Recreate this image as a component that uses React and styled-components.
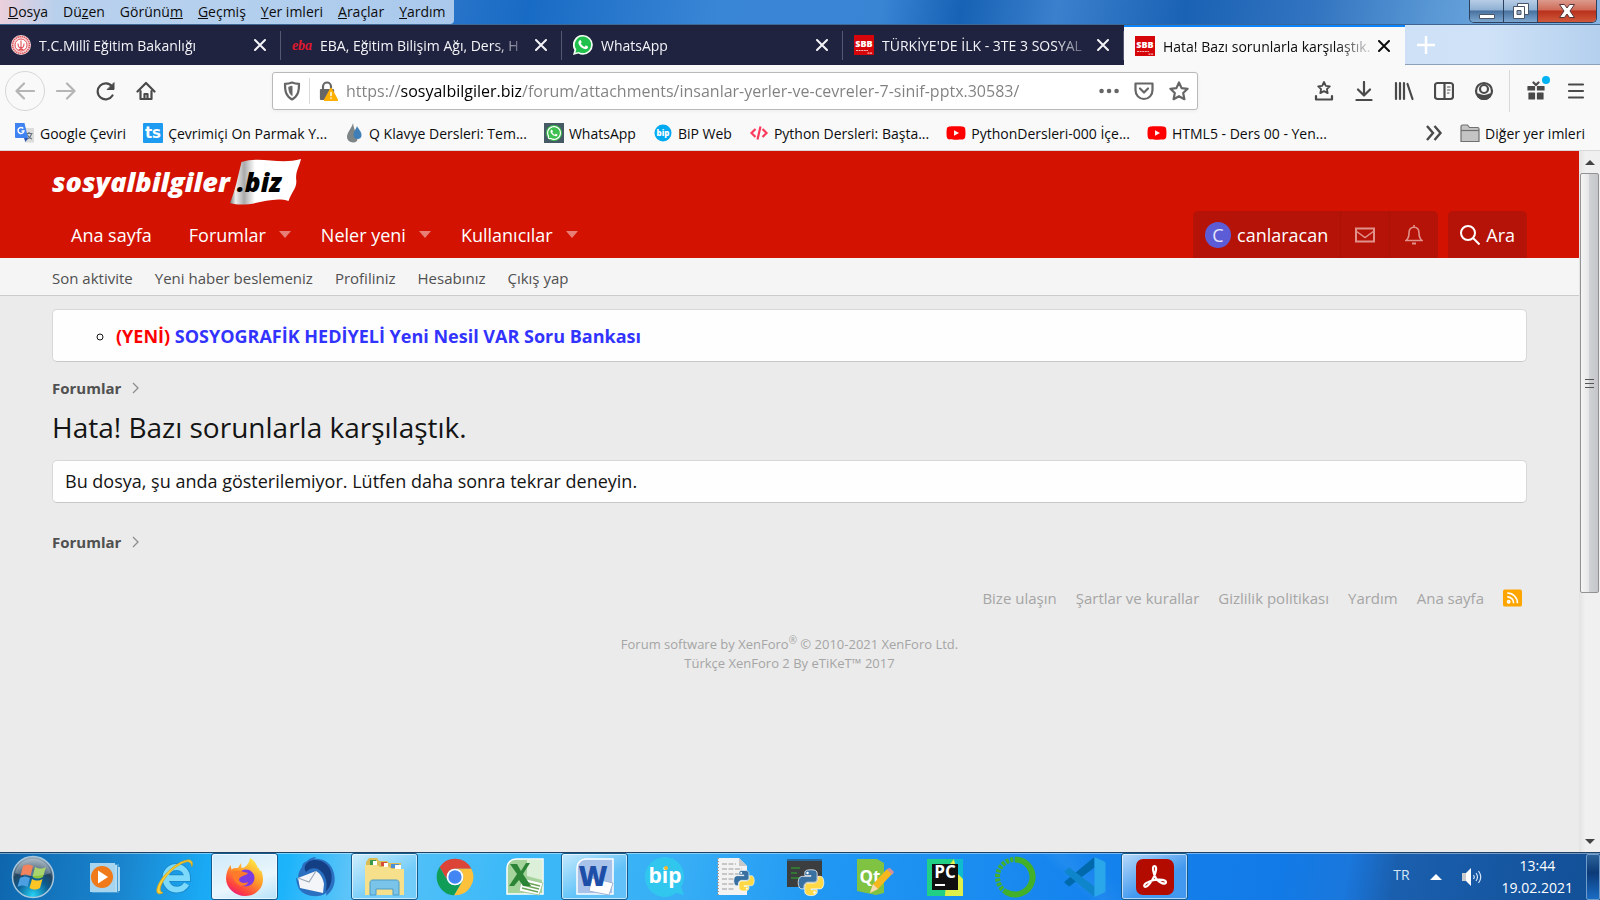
import React, { useState } from 'react'
import styled, { createGlobalStyle } from 'styled-components'
import { FaWhatsapp, FaYoutube } from 'react-icons/fa'

const menuItems = [
  ['', 'D', 'osya'],
  ['Dü', 'z', 'en'],
  ['Görünü', 'm', ''],
  ['', 'G', 'eçmiş'],
  ['', 'Y', 'er imleri'],
  ['', 'A', 'raçlar'],
  ['', 'Y', 'ardım'],
]

const tabs = [
  { icon: 'meb', title: 'T.C.Millî Eğitim Bakanlığı' },
  { icon: 'eba', title: 'EBA, Eğitim Bilişim Ağı, Ders, H' },
  { icon: 'whatsapp', title: 'WhatsApp' },
  { icon: 'sbb', title: "TÜRKİYE'DE İLK - 3TE 3 SOSYAL" },
  { icon: 'sbb', title: 'Hata! Bazı sorunlarla karşılaştık.' },
]

const bookmarks = [
  { icon: 'translate', title: 'Google Çeviri' },
  { icon: 'ts', title: 'Çevrimiçi On Parmak Y...' },
  { icon: 'drop', title: 'Q Klavye Dersleri: Tem...' },
  { icon: 'whatsappBox', title: 'WhatsApp' },
  { icon: 'bipSmall', title: 'BiP Web' },
  { icon: 'code', title: 'Python Dersleri: Başta...' },
  { icon: 'youtube', title: 'PythonDersleri-000 İçe...' },
  { icon: 'youtube', title: 'HTML5 - Ders 00 - Yen...' },
]

const navItems = [
  { title: 'Ana sayfa' },
  { title: 'Forumlar', menu: true },
  { title: 'Neler yeni', menu: true },
  { title: 'Kullanıcılar', menu: true },
]

const subNav = ['Son aktivite', 'Yeni haber beslemeniz', 'Profiliniz', 'Hesabınız', 'Çıkış yap']
const footerLinks = ['Bize ulaşın', 'Şartlar ve kurallar', 'Gizlilik politikası', 'Yardım', 'Ana sayfa']

const PythonMark = () => (
  <>
    <path fill="#3871a1" stroke="#fff" strokeWidth="3" d="M63.391 1.988c-4.222.02-8.252.379-11.8 1.007-10.45 1.846-12.346 5.71-12.346 12.837v9.411h24.693v3.137H29.977c-7.176 0-13.46 4.313-15.426 12.521-2.268 9.405-2.368 15.275 0 25.096 1.755 7.311 5.947 12.519 13.124 12.519h8.491V67.234c0-8.151 7.051-15.34 15.426-15.34h24.665c6.866 0 12.346-5.654 12.346-12.548V15.833c0-6.693-5.646-11.72-12.346-12.837-4.244-.706-8.645-1.027-12.866-1.008z" />
    <path fill="#ffd845" stroke="#fff" strokeWidth="3" d="M91.682 28.38v10.966c0 8.5-7.208 15.655-15.426 15.655H51.591c-6.756 0-12.346 5.783-12.346 12.549v23.515c0 6.691 5.818 10.628 12.346 12.547 7.816 2.297 15.312 2.713 24.665 0 6.216-1.801 12.346-5.423 12.346-12.547v-9.412H63.938v-3.138h37.012c7.176 0 9.852-5.005 12.348-12.519 2.578-7.735 2.467-15.174 0-25.096-1.774-7.145-5.161-12.521-12.348-12.521h-9.268z" />
    <circle cx="50" cy="14.5" r="5" fill="#fff" />
    <circle cx="78" cy="92.5" r="5" fill="#fff" />
  </>
)

const smallIcons = {
  meb: (
    <svg viewBox="0 0 20 20" width="20" height="20">
      <circle cx="10" cy="10" r="10" fill="#f6dcdd" />
      <circle cx="10" cy="10" r="8.4" fill="none" stroke="#e0525a" strokeWidth="1.6" strokeDasharray="1.4 .7" />
      <circle cx="10" cy="10" r="6" fill="#fff" stroke="#e0525a" />
      <path d="M10 5.500v8M7 8.500c0 4 1.500 4.500 3 5 1.500-.5 3-1 3-5M7.500 14.500h5" fill="none" stroke="#e0525a" strokeWidth="1.100" />
    </svg>
  ),
  eba: (
    <svg viewBox="0 0 20 20" width="20" height="20">
      <text x="10" y="15" textAnchor="middle" fontFamily="Liberation Serif, serif" fontStyle="italic" fontWeight="700" fontSize="14" fill="#e0182d">eba</text>
    </svg>
  ),
  whatsapp: (
    <svg viewBox="0 0 20 20" width="20" height="20">
      <path d="M10 0a9.800 9.800 0 0 1 0 19.700 10 10 0 0 1-4.700-1.200L0 20l1.400-5A9.800 9.800 0 0 1 10 0z" fill="#f4fff4" />
      <path d="M10 1.600a8.200 8.200 0 1 1-4.200 15.300l-3.400.9.9-3.300A8.200 8.200 0 0 1 10 1.600z" fill="#1fc04c" />
      <path d="M6.900 5.200c.5-.2.9 0 1.100.5l.6 1.400c.1.300 0 .6-.8 1.500.8 1.600 2 2.700 3.700 3.300l.9-1.100c.2-.3.400-.3.700-.2l1.700.8c.4.200.400.5.200 1.100-.5 1.500-2 1.900-3.200 1.600-3-.8-5.600-3.300-6.300-5.700-.3-1.300.3-2.700 1.400-3.200z" fill="#fff" />
    </svg>
  ),
  sbb: (
    <svg viewBox="0 0 20 20" width="20" height="20">
      <path d="M0 0h20v20H0z" fill="#d6050a" />
      <text x="10" y="11.500" textAnchor="middle" fontFamily="Open Sans, sans-serif" fontWeight="800" fontSize="9" fill="#fff">SBB</text>
      <path d="M2 15.500h12M13.500 18.200h5" stroke="#fff" strokeWidth="1.200" opacity=".7" strokeDasharray="2 .6" />
    </svg>
  ),
  translate: (
    <svg viewBox="0 0 20 20" width="20" height="20">
      <path d="M7 5h12v14.500H10z" fill="#dcdcdc" />
      <path d="M10.500 10.500h7M14 9v1.500M16.500 10.500c-.5 2.800-2.500 4.800-5 6M12 11.500c1 2.200 2.700 3.700 5 4.500" stroke="#61717f" fill="none" strokeWidth="1.200" />
      <path d="M0 0h9.500l3.500 15H1a1 1 0 0 1-1-1z" fill="#3f83f2" />
      <path d="M8.300 5.500A3 3 0 1 0 9 8H6.500" stroke="#fff" fill="none" strokeWidth="1.400" />
      <path d="M9 15h4l-2.500 4z" fill="#2a55b5" />
    </svg>
  ),
  ts: (
    <svg viewBox="0 0 20 20" width="20" height="20">
      <rect width="20" height="20" rx="1" fill="#1d9bf0" />
      <text x="10" y="15" textAnchor="middle" fontFamily="DejaVu Sans, sans-serif" fontWeight="700" fontSize="15" fill="#fff">ts</text>
    </svg>
  ),
  drop: (
    <svg viewBox="0 0 20 20" width="20" height="20">
      <path d="M9 0C8 5 3 9 3 14a6 6 0 0 0 10 4c2-4-3-10-4-18z" fill="#7e8586" />
      <path d="M13 3c-.6 3-3.500 5-3.500 9a4 4 0 0 0 8 0c0-4-3.500-6-4.500-9z" fill="#3f7fb8" />
    </svg>
  ),
  bipSmall: (
    <svg viewBox="0 0 20 20" width="20" height="20">
      <circle cx="10" cy="10" r="8.500" fill="#00aaf2" />
      <text x="10" y="13" textAnchor="middle" fontFamily="Open Sans, sans-serif" fontWeight="800" fontSize="8" fill="#fff">bip</text>
    </svg>
  ),
  code: (
    <svg viewBox="0 0 20 20" width="20" height="20" fill="none" stroke="#fb3a5d" strokeWidth="2.200">
      <path d="M6.500 6 2.500 10l4 4M13.500 6l4 4-4 4M11.500 3.500l-3 13" />
    </svg>
  ),
}

const taskIcons = {
  media: (
    <svg viewBox="0 0 38 38" width="38" height="38">
      <path d="M6 6h27v29H6z" fill="#5ba8d8" opacity=".7" />
      <path d="M4 5h25v29H4z" fill="#a7d4ef" />
      <path d="M30 7v27M33 9v24" stroke="#d8effb" strokeWidth="1.500" />
      <circle cx="16" cy="19" r="11" fill="#f07a1a" />
      <path d="M12 12.500v13l10-6.500z" fill="#fff" />
    </svg>
  ),
  ie: (
    <svg viewBox="0 0 38 38" width="40" height="40">
      <path d="M10 20h20.500c0-6.500-4.500-10.500-10.200-10.500S10 14 10 20s4.500 11 10.500 11c4.500 0 7.500-2 9.500-5.500" fill="none" stroke="#1b8cd0" strokeWidth="7.500" />
      <path d="M10 20h20.500c0-6.500-4.500-10.500-10.200-10.500S10 14 10 20s4.500 11 10.500 11c4.500 0 7.500-2 9.500-5.500" fill="none" stroke="#7ddafa" strokeWidth="5.500" />
      <path d="M35 9c1.500-5-1-7-5-6C20 5 6 18 2.500 28c-2 6 0 8.500 5 6C3 33 5 27 9 21 15 12 24 6 30 4.500c3-.5 4.500 1 5 4.500z" fill="#f8d03a" stroke="#d9a514" strokeWidth=".8" />
    </svg>
  ),
  firefox: (
    <svg viewBox="0 0 38 38" width="38" height="38">
      <defs>
        <linearGradient id="fx" x1=".8" y1="0" x2=".2" y2="1">
          <stop offset="0" stopColor="#fff04a" />
          <stop offset=".45" stopColor="#ff9a2a" />
          <stop offset=".8" stopColor="#ff4040" />
          <stop offset="1" stopColor="#e31587" />
        </linearGradient>
      </defs>
      <path d="M24 0c5 3 7 7 7.500 9.500 1.500.5 2 2 2.500 3.500 1 .5 1-1 1-1 2 5 2 8 2 9.500C37 31 29 38 19 38S0 30 0 20.500C0 16 1.500 11 4.500 7l1 4.500C8 9.500 10 10 12 10l3-5 .5 5c2 0 4-1 5.500-3 1.500-2 2.500-4 3-7z" fill="url(#fx)" />
      <circle cx="20" cy="20" r="8.500" fill="#7a3be0" />
      <path d="M6 14c4-2 8-2 12 0l4 1c-1 2-4 2-5 3 0 0-4 1-4 4 1 3 5 4 9 2-2 7-15 5-16-10z" fill="#ff7a2b" />
    </svg>
  ),
  thunderbird: (
    <svg viewBox="0 0 42 40" width="42" height="40">
      <path d="M13 4c3-3 6-4 9-4l-2 2c8-1 15 3 18 9 5 10 3 22-6 28 1-2 0-3 0-3-8 6-22 3-27-4-2-4-3-9-3-12l2 3c0-6 1-9 4-13 0-3 2-5 5-6z" fill="#2a6fc0" />
      <path d="M14 5c8-5 21 0 23 10 2 8-1 16-5 19 2-10-1-18-8-22-5-2-9 0-12 3-2-3-2-7 2-10z" fill="#153f85" />
      <path d="M4 21 22 14c5 3 7 8 8 13l-1 9-23-5z" fill="#f3f5f8" />
      <path d="m4 21 11 4 7-11" fill="none" stroke="#9ea8b6" strokeWidth="1.200" />
    </svg>
  ),
  explorer: (
    <svg viewBox="0 0 42 40" width="42" height="40">
      <path d="M2 5 5 1h8l2 3h8l2 2h12v32H2z" fill="#d9bc56" />
      <path d="M6 3h6v5H6z" fill="#3b9a49" /><path d="M17 5h6v4h-6z" fill="#d65039" /><path d="M27 7h8v4h-8z" fill="#4b8ed1" />
      <path d="M9 4h4v4H9zM20 6h4v4h-4zM31 8h6v4h-6z" fill="#fff" />
      <path d="M1 8h12l3 2h9l3 2h12v26H1z" fill="#f6e08c" />
      <path d="M6 38V26c0-2 1-3 3-3h23c2 0 3 1 3 3v12h-6v-6H12v6z" fill="#79c4e8" stroke="#4c9bc8" />
    </svg>
  ),
  chrome: (
    <svg viewBox="0 0 48 48" width="40" height="40">
      <path d="M5.540 12.030A22 22 0 0 1 43.600 14H24a10 10 0 0 0-8.660 15z" fill="#db4437" />
      <path d="M43.600 14A22 22 0 0 1 22.860 45.970L32.660 29A10 10 0 0 0 24 14z" fill="#fdc13c" />
      <path d="M22.860 45.970A22 22 0 0 1 5.540 12.030L15.340 29a10 10 0 0 0 17.320 0z" fill="#0f9d58" />
      <circle cx="24" cy="24" r="10" fill="#fff" />
      <circle cx="24" cy="24" r="8" fill="#4285f4" />
    </svg>
  ),
  excel: (
    <svg viewBox="0 0 40 40" width="40" height="40">
      <path d="M11 2h27v35H2V11c0-5 4-9 9-9z" fill="#a5d39c" stroke="#fff" strokeWidth="1.500" />
      <path d="M22 3h15v20l-15-4z" fill="#dcefd8" />
      <path d="m17 21 21 5-4 12-20-4z" fill="#fff" stroke="#a8c99e" />
      <path d="m19 25 16 4M18 28l16 4M17 31l16 4" stroke="#6aa458" strokeWidth="1.500" />
      <path d="M5 7h7l4 7 5-8h4l-7 11 8 12h-8l-4-6-5 6H4l8-12z" fill="#2c8436" />
    </svg>
  ),
  word: (
    <svg viewBox="0 0 40 40" width="40" height="40">
      <path d="M11 2h27v35H2V11c0-5 4-9 9-9z" fill="#a9c2ea" stroke="#fff" strokeWidth="1.500" />
      <path d="m17 21 21 5-4 12-20-4z" fill="#fff" stroke="#a2b4d4" />
      <text x="18" y="29" textAnchor="middle" fontFamily="Open Sans, sans-serif" fontWeight="800" fontSize="28" fill="#1d4fa8">W</text>
    </svg>
  ),
  bip: (
    <svg viewBox="0 0 40 40" width="40" height="40">
      <path d="M20 0c11 0 19 9 19 20 0 4-1 7-3 10l3 8-8-2c-3 2-7 4-11 4C9 40 0 31 0 20S9 0 20 0z" fill="#30c6ee" />
      <text x="20" y="26" textAnchor="middle" fontFamily="Open Sans, sans-serif" fontWeight="700" fontSize="21" fill="#fff">bip</text>
      <circle cx="21" cy="11" r="2" fill="#f5b82e" />
    </svg>
  ),
  pyfile: (
    <svg viewBox="0 0 40 40" width="40" height="40">
      <path d="M3 1h21l8 8v29H3z" fill="#f2f2f2" />
      <path d="M24 1v8h8z" fill="#c8c8c8" />
      <path d="M7 7h14M7 12h20M7 17h18M7 22h12M7 27h12M7 32h12" stroke="#b9b9b9" strokeWidth="1.500" strokeDasharray="5 1.500" />
      <path d="M3 1v37" stroke="#999" strokeDasharray="1 2" strokeWidth="2" />
      <svg x="17" y="13" width="24" height="22" viewBox="8 0 112 110"><PythonMark /></svg>
    </svg>
  ),
  pyconsole: (
    <svg viewBox="0 0 40 40" width="40" height="40">
      <path d="M2 2h35v28H2z" fill="#3c3d3f" />
      <path d="M2 2h35v2H2z" fill="#23679c" />
      <path d="M6 11h9M6 16h6M6 21h9" stroke="#2f8a35" strokeWidth="1.500" />
      <svg x="12" y="12" width="28" height="28" viewBox="8 0 112 110"><PythonMark /></svg>
    </svg>
  ),
  qt: (
    <svg viewBox="0 0 40 40" width="40" height="40">
      <path d="M2 2h20l7 4v30l-8 2-19-4z" fill="#80c342" />
      <text x="15" y="26" textAnchor="middle" fontFamily="Open Sans, sans-serif" fontWeight="700" fontSize="17" fill="#fff">Qt</text>
      <path d="m15 36 3-9 14-15 5 5-14 15z" fill="#f5b81f" />
      <path d="m32 12 3-1 4 4-2 3z" fill="#d98f98" />
      <path d="m15 36 3-9 5 5z" fill="#f3dcb4" />
    </svg>
  ),
  pycharm: (
    <svg viewBox="0 0 40 40" width="40" height="40">
      <path d="M2 2h36v37H2z" fill="#21cf85" />
      <path d="M22 11 29 2l9 20v17H20z" fill="#dff04a" />
      <path d="M29 2h9v20l-6-6z" fill="#0ebccd" />
      <path d="M7 7h26v26H7z" fill="#101010" />
      <text x="20" y="21" textAnchor="middle" fontFamily="Open Sans, sans-serif" fontWeight="700" fontSize="17" fill="#fff">PC</text>
      <path d="M10 28h10" stroke="#fff" strokeWidth="2" />
    </svg>
  ),
  anaconda: (
    <svg viewBox="0 0 42 42" width="42" height="42" fill="none" stroke="#43b02a">
      <path d="M21 3.500a17.500 17.500 0 1 1-9 32.500" strokeWidth="6" />
      <path d="M12 36a17.500 17.500 0 0 1 9-32.500" strokeWidth="5" strokeDasharray="3 1.500" />
    </svg>
  ),
  vscode: (
    <svg viewBox="0 0 40 40" width="42" height="42">
      <path d="M29 1v10L5 29l-4-3c-.7-.7-.7-1.500 0-2z" fill="#0069ac" />
      <path d="M29 39V29L5 11l-4 3c-.7.700-.7 1.500 0 2z" fill="#0f86cb" />
      <path d="m29 1 9 4c1 .5 1.500 1 1.500 2v26c0 1-.5 1.500-1.500 2l-9 4z" fill="#2aa6ea" />
    </svg>
  ),
  acrobat: (
    <svg viewBox="0 0 38 38" width="38" height="38">
      <rect y="1" width="38" height="36" rx="7" fill="#b30b00" />
      <path d="M18.500 8c3 0 1.500 8-2 13.500-3 5-6.500 8.500-8 7-1.800-2 4-5.500 10-6.500 6-1 11.500 0 11.500 2.300-.5 3-7 .5-10-4-2.500-4-4.500-12.300-1.500-12.300z" fill="none" stroke="#fff" strokeWidth="2.200" />
    </svg>
  ),
}

const taskbar = [
  { icon: 'media', title: 'Windows Media Player' },
  { icon: 'ie', title: 'Internet Explorer' },
  { icon: 'firefox', title: 'Firefox', state: 'active' },
  { icon: 'thunderbird', title: 'Thunderbird' },
  { icon: 'explorer', title: 'Windows Gezgini', state: 'open' },
  { icon: 'chrome', title: 'Chrome' },
  { icon: 'excel', title: 'Excel' },
  { icon: 'word', title: 'Word', state: 'open' },
  { icon: 'bip', title: 'BiP' },
  { icon: 'pyfile', title: 'IDLE' },
  { icon: 'pyconsole', title: 'Python' },
  { icon: 'qt', title: 'Qt Designer' },
  { icon: 'pycharm', title: 'PyCharm' },
  { icon: 'anaconda', title: 'Anaconda' },
  { icon: 'vscode', title: 'VS Code' },
  { icon: 'acrobat', title: 'Acrobat Reader', state: 'open' },
]

const SmallIcon = ({ name }) => {
  if (name === 'youtube') return <FaYoutube size={20} color="#f00" />
  if (name === 'whatsappBox') return <WhatsappBox><FaWhatsapp size={16} /></WhatsappBox>
  return smallIcons[name]
}

const CloseIcon = () => (
  <svg viewBox="0 0 12 12" width="12" height="12" stroke="currentColor" strokeWidth="2" strokeLinecap="round">
    <path d="m1 1 10 10M11 1 1 11" />
  </svg>
)

const Tool = ({ label, children, ...rest }) => (
  <ToolButton aria-label={label} {...rest}>
    <svg viewBox="0 0 20 20" width="20" height="20" fill="none" stroke="currentColor" strokeWidth="2.200" strokeLinecap="round" strokeLinejoin="round">
      {children}
    </svg>
  </ToolButton>
)

const Crumbs = () => (
  <Breadcrumb aria-label="Konum">
    <a href="#forumlar">Forumlar</a>
    <svg viewBox="0 0 8 12" width="8" height="12" fill="none" stroke="#8d8d8d" strokeWidth="1.300"><path d="m1 1 5 5-5 5" /></svg>
  </Breadcrumb>
)

const App = () => {
  const [activeTab, setActiveTab] = useState(4)
  const [url, setUrl] = useState('https://sosyalbilgiler.biz/forum/attachments/insanlar-yerler-ve-cevreler-7-sinif-pptx.30583/')

  return (
    <Desktop>
      <GlobalStyle />
      <TitleBar>
        <MenuBar>
          {menuItems.map(([before, key, after]) => (
            <MenuButton key={before + key + after}>{before}<u>{key}</u>{after}</MenuButton>
          ))}
        </MenuBar>
        <WindowControls>
          <ControlButton aria-label="Küçült">
            <svg viewBox="0 0 18 18" width="18" height="18"><path d="M1.500 12.500h15v4h-15z" fill="#fff" stroke="#4b5668" /></svg>
          </ControlButton>
          <ControlButton aria-label="Önceki boyut">
            <svg viewBox="0 0 18 18" width="18" height="18" fill="#fff" stroke="#4b5668"><path d="M5.500 1.500h11v11h-11z" /><path d="M1.500 4.500h11v12h-11z" /><path d="M5 8.500h4v4H5z" fill="#8fa3bd" /></svg>
          </ControlButton>
          <ControlButton $close aria-label="Kapat">
            <svg viewBox="0 0 18 18" width="18" height="18"><path d="M1.500 2.500h5L9 6l2.500-3.500h5L12 9l4.500 6.500h-5L9 12l-2.500 3.500h-5L6 9z" fill="#fff" stroke="#54343a" /></svg>
          </ControlButton>
        </WindowControls>
      </TitleBar>

      <TabStrip>
        {tabs.map((tab, i) => (
          <Tab key={tab.title} $active={i === activeTab}>
            <TabTitle onClick={() => setActiveTab(i)}>
              <SmallIcon name={tab.icon} />
              <span>{tab.title}</span>
            </TabTitle>
            <TabClose aria-label="Sekmeyi kapat"><CloseIcon /></TabClose>
          </Tab>
        ))}
        <NewTab aria-label="Yeni sekme">
          <svg viewBox="0 0 18 18" width="18" height="18" stroke="#fff" strokeWidth="2.500"><path d="M9 0v18M0 9h18" /></svg>
        </NewTab>
      </TabStrip>

      <Toolbar>
        <Tool label="Geri" $round disabled><path d="M19 10H2M9 2.500 1.500 10 9 17.500" /></Tool>
        <Tool label="İleri" disabled><path d="M1 10h17M11 2.500l7.500 7.500-7.500 7.500" /></Tool>
        <Tool label="Yenile"><path d="M16.500 14.500A8 8 0 1 1 16 5.500" /><path d="M18 2v6.500h-6.500z" fill="currentColor" strokeWidth="1" /></Tool>
        <Tool label="Giriş sayfası"><path d="M1.500 10.500 10 2l8.500 8.500" /><path d="M4.500 10v8h11v-8" /><path d="M8.500 18v-5h3v5" /></Tool>
        <Spacer />
        <UrlBar>
          <Tool label="Koruma" $tight><path d="M10 1.500c2.500 1 4.500 1.300 7 1.300 0 7-.5 12-7 15.700C3.500 14.800 3 9.800 3 2.800c2.500 0 4.500-.3 7-1.300z" /><path d="M10 5.500v9c-2.500-2-3-4.500-3.200-8z" fill="currentColor" strokeWidth="1" /></Tool>
          <Divider $height={26} />
          <Tool label="Site bilgisi" $tight>
            <path d="M5 9V5.500a4 4 0 0 1 8 0V8" />
            <path d="M3 9h12v9H3z" fill="currentColor" />
            <path d="m13 8 6 11H7z" fill="#ffb000" stroke="#ffb000" /><path d="M13 11.500v3M13 17v.3" stroke="#fff" strokeWidth="1.500" />
          </Tool>
          <UrlInput aria-label="Adres" value={url} onChange={(e) => setUrl(e.target.value)} />
          <Tool label="Sayfa eylemleri" $tight><path d="M2.500 10h.1M10 10h.1M17.500 10h.1" strokeWidth="4.500" /></Tool>
          <Tool label="Pocket" $tight><path d="M1.500 2.500h17V9c0 5-3.500 9-8.500 9s-8.500-4-8.500-9z" /><path d="m6 7.500 4 4 4-4" /></Tool>
          <Tool label="Yer imlerine ekle" $tight><path d="m10 1.500 2.600 5.600 6 .7-4.400 4.200 1.200 6.200-5.400-3-5.400 3L5.800 12 1.400 7.800l6-.7z" /></Tool>
        </UrlBar>
        <Spacer />
        <Tool label="Yer imleri menüsü"><path d="m10 1 1.800 3.800 4 .5-2.900 2.800.8 4-3.700-2-3.700 2 .8-4-2.900-2.800 4-.5z" strokeWidth="1.800" /><path d="M2 15v3.500h16V15" /></Tool>
        <Tool label="İndirilenler"><path d="M10 1v13M4 8.500l6 6 6-6M2.500 19h15" /></Tool>
        <Tool label="Kitaplık"><path d="M2 2v16M6 2v16M10 2v16M13.500 3l5 15" /></Tool>
        <Tool label="Kenar çubuğu"><rect x="1" y="2" width="18" height="16" rx="2.500" /><path d="M10.500 2v16" /><path d="M13.500 6h2.500M13.500 9h2.500M13.500 12h1.500" strokeWidth="1.200" /></Tool>
        <Tool label="Hesap"><circle cx="10" cy="10" r="8" /><circle cx="10" cy="8" r="4" /><path d="M4 13.500c4 2 8 2 12 0-1 3-3 4.500-6 4.500s-5-1.500-6-4.500z" fill="currentColor" /></Tool>
        <GiftSlot>
          <Divider $height={42} />
          <Tool label="Yenilikler">
            <path d="M2 5.500h6.500V9H2zM11.500 5.500H18V9h-6.500zM3 12h5.500v6H3zM11.500 12H17v6h-5.500z" fill="currentColor" strokeWidth="1.200" />
            <path d="M10 4 7.500 1.500M10 4l2.500-2.500" />
          </Tool>
          <Dot />
        </GiftSlot>
        <Tool label="Menü"><path d="M3 3.500h14M3 10h14M3 16.500h14" /></Tool>
      </Toolbar>

      <BookmarkBar>
        {bookmarks.map((item) => (
          <Bookmark key={item.title} href="#yer-imi"><SmallIcon name={item.icon} /><span>{item.title}</span></Bookmark>
        ))}
        <BookmarkEnd>
          <MoreButton aria-label="Diğerlerini göster">
            <svg viewBox="0 0 18 16" width="18" height="16" fill="none" stroke="#4a4a4a" strokeWidth="2.400"><path d="m2 1 6 7-6 7M9.500 1l6 7-6 7" /></svg>
          </MoreButton>
          <Bookmark href="#diger">
            <svg viewBox="0 0 20 20" width="20" height="20" fill="#c4c4c4" stroke="#707070" strokeWidth="1.200"><path d="M1 18.500V3.500c0-1 .5-1.500 1.500-1.500h5l2 2.500h8c1 0 1.500.5 1.500 1.500v12.500z" /><path d="M1 7.500h18" /></svg>
            <span>Diğer yer imleri</span>
          </Bookmark>
        </BookmarkEnd>
      </BookmarkBar>

      <Viewport>
        <Page>
          <SiteHeader>
            <Logo href="#ana">
              <LogoName>sosyalbilgiler</LogoName>
              <svg viewBox="0 0 75 46" width="72" height="46" preserveAspectRatio="none">
                <defs>
                  <linearGradient id="flag">
                    <stop offset="0" stopColor="#777" />
                    <stop offset=".08" stopColor="#eee" />
                    <stop offset=".2" stopColor="#aaa" />
                    <stop offset=".35" stopColor="#fff" />
                    <stop offset="1" stopColor="#fff" />
                  </linearGradient>
                </defs>
                <path d="M12 3c20-6 40 3 62-3-2 8-6 13-5 21s-5 12-8 21C42 36 22 50 0 44 6 30 8 18 12 3z" fill="url(#flag)" />
              </svg>
              <LogoSuffix>.biz</LogoSuffix>
            </Logo>
            <NavRow>
              <Nav>
                {navItems.map((item) => (
                  <NavItem key={item.title}>
                    <a href="#menu">{item.title}</a>
                    {item.menu && (
                      <button aria-label={item.title + ' menüsü'}>
                        <svg viewBox="0 0 12 7" width="12" height="7"><path d="M0 0h12L6 7z" fill="#e77f77" /></svg>
                      </button>
                    )}
                  </NavItem>
                ))}
              </Nav>
              <AccountGroup>
                <HeaderButton><Avatar>C</Avatar>canlaracan</HeaderButton>
                <HeaderButton $icon aria-label="Mesajlar">
                  <svg viewBox="0 0 20 16" width="20" height="16" fill="none" stroke="currentColor" strokeWidth="2"><path d="M1 1.500h18v13H1z" /><path d="m1 4 9 6.500L19 4" strokeWidth="1.500" /></svg>
                </HeaderButton>
                <HeaderButton $icon aria-label="Bildirimler">
                  <svg viewBox="0 0 18 20" width="18" height="20" fill="none" stroke="currentColor" strokeWidth="1.600"><path d="M9 0v2M1 15.500c2.500-2 3-4 3-7.500 0-3.500 2-5.800 5-5.800s5 2.300 5 5.800c0 3.500.5 5.500 3 7.500z" /><path d="M7 18.500h4" strokeWidth="2" /></svg>
                </HeaderButton>
              </AccountGroup>
              <AccountGroup>
                <HeaderButton>
                  <svg viewBox="0 0 20 20" width="20" height="20" fill="none" stroke="currentColor" strokeWidth="2"><circle cx="8" cy="8" r="7" /><path d="m13 13 6.500 6.500" /></svg>
                  Ara
                </HeaderButton>
              </AccountGroup>
            </NavRow>
          </SiteHeader>
          <SubNav>{subNav.map((item) => <a key={item} href="#alt">{item}</a>)}</SubNav>

          <Content>
            <Notice>
              <ul>
                <li><strong>(YENİ)</strong> <a href="#duyuru">SOSYOGRAFİK HEDİYELİ Yeni Nesil VAR Soru Bankası</a></li>
              </ul>
            </Notice>
            <Crumbs />
            <Heading>Hata! Bazı sorunlarla karşılaştık.</Heading>
            <Message>Bu dosya, şu anda gösterilemiyor. Lütfen daha sonra tekrar deneyin.</Message>
            <Crumbs />
          </Content>

          <Footer>
            <FooterLinks>
              {footerLinks.map((item) => <a key={item} href="#alt-bilgi">{item}</a>)}
              <a href="#rss" aria-label="RSS">
                <svg viewBox="0 0 20 18" width="19" height="18" fill="none" stroke="#fff" strokeWidth="1.700"><rect width="20" height="18" rx="2" fill="#ffa500" stroke="none" /><circle cx="6" cy="13" r="1.200" /><path d="M4.500 7.800a6.500 6.500 0 0 1 6.700 6.700M4.500 3.800a10.500 10.500 0 0 1 10.700 10.700" /></svg>
              </a>
            </FooterLinks>
            <Copyright>
              Forum software by XenForo<sup>®</sup> © 2010-2021 XenForo Ltd.<br />
              Türkçe XenForo 2 By eTiKeT™ 2017
            </Copyright>
          </Footer>
        </Page>

        <Scrollbar>
          <Arrow><svg viewBox="0 0 10 5" width="10" height="5"><path d="m5 0 5 5H0z" fill="#444" /></svg></Arrow>
          <Track>
            <Thumb>
              <svg viewBox="0 0 9 11" width="9" height="11" stroke="#555"><path d="M0 1.500h9M0 5.500h9M0 9.500h9" /></svg>
            </Thumb>
          </Track>
          <Arrow><svg viewBox="0 0 10 5" width="10" height="5"><path d="M0 0h10L5 5z" fill="#444" /></svg></Arrow>
        </Scrollbar>
      </Viewport>

      <Taskbar>
        <StartButton aria-label="Başlat">
          <svg viewBox="0 0 44 44" width="44" height="44">
            <defs>
              <radialGradient id="orb" cx=".5" cy=".95" r=".9">
                <stop offset="0" stopColor="#26d3f5" />
                <stop offset=".45" stopColor="#0b5c94" />
                <stop offset=".7" stopColor="#24455f" />
                <stop offset="1" stopColor="#93a5b4" />
              </radialGradient>
            </defs>
            <circle cx="22" cy="22" r="20.500" fill="url(#orb)" stroke="#a9c8dd" strokeWidth="1.500" />
            <path d="M12 11c4-2 7-2 10 0l-2.500 10c-3-2-6-2-10 0z" fill="#ee5a26" />
            <path d="M24 12c4 2 7 2 11 0l-3 10c-4 2-7 2-10.500 0z" fill="#8cc63e" />
            <path d="M9 23c4-2 7-2 10 0l-2.500 9c-3-2-6-2-10 0z" fill="#4c9fe0" />
            <path d="M21 24c4 2 7 2 10.500 0L29 33c-4 2-7 2-10.500 0z" fill="#fcc526" />
            <path d="M4 18a18.500 18.500 0 0 1 36 0c-10 4-26 4-36 0z" fill="#fff" opacity=".25" />
          </svg>
        </StartButton>
        {taskbar.map((item) => (
          <TaskButton key={item.icon} aria-label={item.title} $state={item.state}>{taskIcons[item.icon]}</TaskButton>
        ))}
        <Tray>
          <Language>TR</Language>
          <TrayButton aria-label="Gizli simgeler"><svg viewBox="0 0 12 6" width="12" height="6"><path d="m6 0 6 6H0z" fill="#fff" /></svg></TrayButton>
          <TrayButton aria-label="Ses">
            <svg viewBox="0 0 20 20" width="20" height="20"><path d="M0 6h4v8H0z" fill="#ccc" /><path d="M4 6 9 1v18l-5-5z" fill="#fff" /><path d="M11.500 8q1.500 2 0 4M14 6q3 4 0 8M16.500 4q4.500 6 0 12" fill="none" stroke="#d5e6f7" strokeWidth="1.200" /></svg>
          </TrayButton>
          <Clock><span>13:44</span><span>19.02.2021</span></Clock>
          <ShowDesktop aria-label="Masaüstünü göster" />
        </Tray>
      </Taskbar>
    </Desktop>
  )
}

export default App

const GlobalStyle = createGlobalStyle`
* {
box-sizing: border-box;
}

body {
margin: 0;
font-family: "Open Sans", "Noto Sans", sans-serif;
}

button {
font: inherit;
color: inherit;
background: none;
border: none;
padding: 0;
}

a {
color: inherit;
text-decoration: none;
}

svg {
display: block;
flex-shrink: 0;
}
`

const Desktop = styled.div`
display: flex;
flex-direction: column;
min-height: 100vh;
font-size: 14px;
color: #0c0c0d;
`

const TitleBar = styled.div`
display: flex;
justify-content: space-between;
align-items: flex-start;
height: 25px;
border-bottom: 1px solid #3f6591;
background: linear-gradient(100deg, #6a97d0 0, #2f78cc 26%, #186bc4 33%, #3a86d6 45%, #3a84d4 55%, #1762b4 60%, #3a80cd 66%, #1a62b4 74%, #3274c0 82%, #5c9ad6 90%, #86b4e2 100%);
`

const MenuBar = styled.nav`
display: flex;
gap: 15px;
height: 24px;
padding: 0 8px;
border-radius: 0 0 4px 0;
background: linear-gradient(90deg, #ecd0dc 0, #b9d0ec 12%, #b4d0ee 50%, #a9c8ec 100%);
`

const MenuButton = styled.button`
line-height: 24px;
white-space: nowrap;
`

const WindowControls = styled.div`
display: flex;
height: 23px;
margin-right: 3px;
border: 1px solid #2c4160;
border-top: none;
border-radius: 0 0 5px 5px;
overflow: hidden;
`

const ControlButton = styled.button`
display: flex;
align-items: center;
justify-content: center;
width: ${({ $close }) => ($close ? 58 : 34)}px;
border-right: ${({ $close }) => ($close ? 'none' : '1px solid #2c4160')};
background: ${({ $close }) => ($close
    ? 'linear-gradient(#dc9a8c 0, #cf6b58 45%, #b8301b 50%, #d0583a 100%)'
    : 'linear-gradient(#b7cde6 0, #8fb0d4 45%, #49719f 50%, #7ba7d0 100%)')};
`

const TabStrip = styled.div`
display: flex;
height: 40px;
background: linear-gradient(90deg, #b5cfee, #cfe2f7 93%, #b4d0ee);
border-bottom: 1px solid #8da2b8;
`

const Tab = styled.div`
display: flex;
align-items: center;
flex: 0 1 281px;
min-width: 0;
height: 40px;
padding: 0 15px 0 11px;
color: ${({ $active }) => ($active ? '#0c0c0d' : '#f4f4f8')};
background: ${({ $active }) => ($active ? '#f9f9fa' : 'linear-gradient(#565872, #565872) right center / 1px 29px no-repeat #202340')};
border-top: ${({ $active }) => ($active ? '2px solid #0a84ff' : '0 solid')};
`

const TabTitle = styled.button`
display: flex;
align-items: center;
gap: 8px;
flex: 1;
min-width: 0;
height: 100%;
text-align: left;

span {
flex: 1;
overflow: hidden;
white-space: nowrap;
mask-image: linear-gradient(90deg, #000 calc(100% - 40px), transparent);
}
`

const TabClose = styled.button`
display: flex;
align-items: center;
justify-content: flex-end;
width: 14px;
height: 20px;
`

const NewTab = styled.button`
display: flex;
align-items: center;
justify-content: center;
width: 42px;
`

const Toolbar = styled.div`
display: flex;
align-items: center;
height: 51px;
padding: 0 4px 0 5px;
background: #f9f9fa;
`

const ToolButton = styled.button`
display: flex;
align-items: center;
justify-content: center;
flex-shrink: 0;
width: ${({ $tight }) => ($tight ? 35 : 40)}px;
height: 40px;
margin-right: ${({ $round }) => ($round ? 1 : 0)}px;
border-radius: 50%;
border: ${({ $round }) => ($round ? '1px solid #d7d7d8' : 'none')};
color: ${({ disabled, $tight }) => (disabled ? '#b5b5b6' : $tight ? '#666' : '#4a4a4b')};
`

const Spacer = styled.div`
flex: 0 1 106px;
`

const Divider = styled.div`
width: 1px;
height: ${({ $height }) => $height}px;
background: #d9d9db;
`

const UrlBar = styled.div`
display: flex;
align-items: center;
flex: 1;
height: 38px;
padding: 0 1px;
background: #fff;
border: 1px solid #b9b9ba;
border-radius: 3px;
box-shadow: 0 1px 4px rgba(0, 0, 0, 0.06);
`

/* the domain part of the address is darker than the rest */
const UrlInput = styled.input`
flex: 1;
min-width: 0;
padding: 0 0 0 1px;
border: none;
outline: none;
font: 16px "Open Sans", "Noto Sans", sans-serif;
line-height: 24px;
color: transparent;
caret-color: #000;
background: linear-gradient(90deg, #808080 56px, #000 56px, #000 176px, #808080 176px);
background-clip: text;
`

const GiftSlot = styled.div`
position: relative;
display: flex;
align-items: center;
gap: 6px;
margin-left: 5px;
`

const Dot = styled.span`
position: absolute;
top: 6px;
right: 6px;
width: 8px;
height: 8px;
border-radius: 50%;
background: #00b3f4;
`

const BookmarkBar = styled.div`
display: flex;
align-items: center;
gap: 17px;
height: 35px;
padding: 0 15px;
background: #f9f9fa;
border-bottom: 1px solid #d8d8d9;
`

const Bookmark = styled.a`
display: flex;
align-items: center;
gap: 5px;
white-space: nowrap;
`

const BookmarkEnd = styled.div`
display: flex;
align-items: center;
gap: 17px;
margin-left: auto;
`

const MoreButton = styled.button`
display: flex;
`

const WhatsappBox = styled.span`
display: flex;
align-items: center;
justify-content: center;
width: 20px;
height: 20px;
background: #455a64;

svg {
color: #fff;
border-radius: 50%;
background: #3fbf4f;
}
`

const Viewport = styled.div`
display: flex;
flex: 1;
background: #ebebeb;
`

const Page = styled.div`
flex: 1;
font-size: 18px;
color: #141414;
`

const SiteHeader = styled.header`
padding: 8px 52px 0;
color: #fff;
background: #d31202;
`

const Logo = styled.a`
position: relative;
display: inline-flex;
align-items: flex-start;
height: 52px;
vertical-align: top;
font-weight: 800;
font-style: italic;
line-height: 46px;
`

const LogoName = styled.span`
font-size: 27px;
`

const LogoSuffix = styled.span`
position: absolute;
right: 20px;
font-size: 26px;
color: #000;
`

const NavRow = styled.div`
display: flex;
align-items: flex-end;
gap: 10px;
`

const Nav = styled.nav`
display: flex;
flex: 1;
height: 47px;
`

const NavItem = styled.div`
display: flex;
align-items: center;
padding: 0 18px 0 19px;

button {
display: flex;
padding-left: 13px;
margin-right: -7px;
}
`

const AccountGroup = styled.div`
display: flex;
height: 47px;
border-radius: 5px 5px 0 0;
background: #b51307;
`

const HeaderButton = styled.button`
display: flex;
align-items: center;
gap: 6px;
padding: 0 12px;
color: ${({ $icon }) => ($icon ? '#e1918b' : '#fff')};

& + & {
width: 49px;
justify-content: center;
border-left: 1px solid #a91207;
}
`

const Avatar = styled.span`
width: 26px;
height: 26px;
border-radius: 50%;
font-size: 18px;
line-height: 26px;
text-align: center;
color: #e6e6fa;
background: #5c5cd6;
`

const SubNav = styled.nav`
display: flex;
align-items: center;
gap: 22px;
height: 38px;
padding: 2px 52px 0;
font-size: 15px;
color: #505050;
background: #f5f5f5;
border-bottom: 1px solid #cbcbcb;
`

const Content = styled.main`
padding: 13px 52px 0;
`

const Card = styled.div`
background: #fefefe;
border: 1px solid #d8d8d8;
border-bottom-color: #c8c8c8;
border-radius: 5px;
`

const Notice = styled(Card)`
padding: 13px 12px 11px;
margin-bottom: 13px;

ul {
margin: 0;
padding-left: 51px;
list-style: circle;
}

li {
line-height: 27px;
}

strong {
color: #f00;
}

a {
font-weight: 700;
color: #3333ff;
}
`

const Breadcrumb = styled.nav`
display: flex;
align-items: center;
gap: 11px;
font-size: 15px;
font-weight: 700;
line-height: 26px;
color: #505050;
`

const Heading = styled.h1`
margin: 5px 0 12px;
font-size: 28px;
font-weight: 400;
line-height: 42px;
`

const Message = styled(Card)`
padding: 7px 12px;
margin-bottom: 26px;
line-height: 27px;
`

const Footer = styled.footer`
padding: 29px 52px 0;
color: #a5a5a5;
`

const FooterLinks = styled.nav`
display: flex;
align-items: center;
justify-content: flex-end;
gap: 19px;
padding-right: 5px;
font-size: 15px;
line-height: 28px;
`

const Copyright = styled.div`
padding-top: 23px;
font-size: 13px;
line-height: 19px;
text-align: center;

sup {
font-size: 10px;
line-height: 0;
}
`

const Scrollbar = styled.div`
display: flex;
flex-direction: column;
width: 21px;
padding: 0 1px;
background: linear-gradient(90deg, #e3e3e3, #f0f0f0 30%, #f0f0f0);
`

const Arrow = styled.div`
display: flex;
align-items: center;
justify-content: center;
height: 22px;
`

const Track = styled.div`
flex: 1;
display: flex;
flex-direction: column;
`

const Thumb = styled.div`
display: flex;
align-items: center;
justify-content: center;
flex: 0 0 64%;
border: 1px solid #929295;
border-radius: 2px;
background: linear-gradient(90deg, #f5f5f5, #e6e6e7 45%, #d0d1d4 50%, #c5c6ca);
`

const Taskbar = styled.div`
display: flex;
height: 48px;
border-top: 1px solid #1e4266;
box-shadow: inset 0 1px 0 rgba(255, 255, 255, 0.4);
background: linear-gradient(45deg, transparent 66%, rgba(255, 255, 255, 0.05) 67%, transparent 69%),
linear-gradient(100deg, #0e66ad 0, #1a86cf 8%, #1aaaf5 13%, #1db4fb 18%, #5cc4f8 22%, #3cb9f8 32%, #38aff5 42%, #1f97f3 52%, #1a8bf0 62%, #1483ee 68%, #127ae6 80%, #1a77dc 84%, #1a5fae 87%, #124f96 100%);
`

const StartButton = styled.button`
display: flex;
align-items: center;
justify-content: center;
width: 66px;
margin-right: 5px;
`

const stateFill = {
  active: 'linear-gradient(160deg, #cfeafa, #eaf6fc 60%, #b5e2fa)',
  open: 'linear-gradient(150deg, rgba(255, 255, 255, 0.7), rgba(255, 255, 255, 0.2) 60%)',
}

const TaskButton = styled.button`
display: flex;
align-items: center;
justify-content: center;
flex: 0 1 67px;
min-width: 0;
margin-right: 3px;
border: 1px solid ${({ $state }) => ($state ? '#175a8c' : 'transparent')};
border-radius: 3px;
background: ${({ $state }) => stateFill[$state] || 'none'};
box-shadow: ${({ $state }) => ($state ? 'inset 0 0 0 1px rgba(255, 255, 255, 0.6)' : 'none')};
`

const Tray = styled.div`
display: flex;
align-items: center;
margin-left: auto;
color: #fff;
`

const Language = styled.span`
margin-right: 20px;
padding-bottom: 4px;
font-size: 14px;
color: #d5e6f7;
`

const TrayButton = styled.button`
display: flex;
margin-right: 20px;
`

const Clock = styled.time`
display: flex;
flex-direction: column;
align-items: center;
margin-right: 13px;
line-height: 22px;
`

const ShowDesktop = styled.button`
width: 14px;
height: 46px;
border: 1px solid #6f9ccb;
border-radius: 2px;
background: linear-gradient(#2d6299, #0c3a78 40%, #1a6cc4);
`
